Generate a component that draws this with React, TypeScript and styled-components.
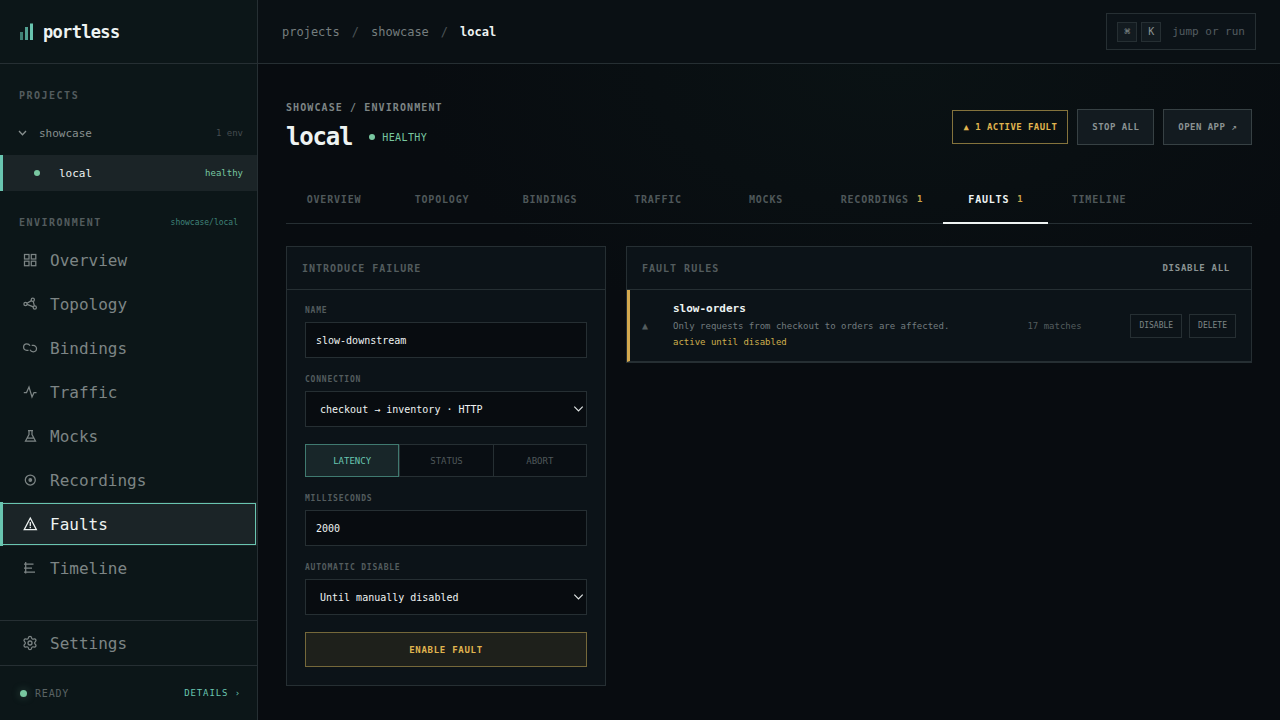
import React, { useState } from "react";
import styled, { createGlobalStyle, css } from "styled-components";
import { Settings } from "lucide-react";

const c = {
  page: "#080c10",
  sidebar: "#0c1618",
  panel: "#0c1318",
  raised: "#131b20",
  line: "#262f33",
  lineStrong: "#374144",
  text: "#eef3f2",
  soft: "#88908f",
  muted: "#535c5e",
  teal: "#69c5b0",
  green: "#78c7a0",
  amber: "#e0b54f",
};

const GlobalStyle = createGlobalStyle`
  *, *::before, *::after { box-sizing: border-box; }
  body {
    margin: 0;
    background: ${c.page};
    color: ${c.text};
    font-family: "DejaVu Sans Mono", "Liberation Mono", monospace;
    font-size: 11px;
  }
  button, input, select { font: inherit; color: inherit; }
  button { cursor: pointer; }
  a { color: inherit; text-decoration: none; }
  h1, h2, h3, p { margin: 0; }
`;

const Shell = styled.div`
  display: grid;
  grid-template-columns: 258px minmax(0, 1fr);
  min-height: 100vh;
`;

/* Sidebar */

const Sidebar = styled.aside`
  display: flex;
  flex-direction: column;
  background: ${c.sidebar};
  border-right: 1px solid ${c.line};
`;

const Brand = styled.a`
  display: flex;
  align-items: center;
  gap: 9px;
  height: 64px;
  padding-left: 19px;
  border-bottom: 1px solid ${c.line};
  font-size: 17px;
  font-weight: 700;
  letter-spacing: -0.04em;
`;

const SectionLabel = styled.div`
  display: flex;
  align-items: center;
  justify-content: space-between;
  height: 32px;
  padding: 0 19px;
  color: ${c.muted};
  font-size: 10px;
  font-weight: 700;
  letter-spacing: 0.15em;
`;

const Scope = styled.span`
  color: #3f8378;
  font-size: 8px;
  font-weight: 400;
  letter-spacing: 0;
`;

const Projects = styled.section`
  padding-top: 15px;
`;

const ProjectButton = styled.button`
  display: flex;
  align-items: center;
  width: 100%;
  height: 44px;
  padding: 0 14px 0 18px;
  border: 0;
  background: none;
  color: ${c.soft};
  text-align: left;
`;

const ProjectName = styled.span`
  flex: 1;
  margin-left: 12px;
`;

const Count = styled.span`
  color: #454d50;
  font-size: 9px;
`;

const EnvLink = styled.a`
  display: flex;
  align-items: center;
  height: 36px;
  padding: 0 14px 0 31px;
  border-left: 3px solid ${c.teal};
  background: #1b2427;
`;

const Dot = styled.i<{ $size?: number; $glow?: boolean }>`
  flex: none;
  width: ${(p) => p.$size ?? 6}px;
  height: ${(p) => p.$size ?? 6}px;
  border-radius: 50%;
  background: ${c.green};
  ${(p) => p.$glow && css`box-shadow: 0 0 8px rgba(120, 199, 160, 0.35);`}
`;

const EnvName = styled.span`
  flex: 1;
  margin-left: 19px;
`;

const EnvState = styled.span`
  color: ${c.green};
  font-size: 9px;
`;

const Nav = styled.nav`
  display: flex;
  flex-direction: column;
  flex: 1;
  padding: 15px 0 29px;
`;

const NavLink = styled.a<{ $active?: boolean }>`
  display: flex;
  align-items: center;
  gap: 12px;
  height: 44px;
  padding-left: 19px;
  border-left: 3px solid transparent;
  color: #7d8585;
  font-size: 16px;
  ${(p) =>
    p.$active &&
    css`
      border-left-color: ${c.teal};
      background: #1b2427;
      color: ${c.text};
      outline: 1px solid ${c.teal};
      outline-offset: -2px;
    `}
`;

const SettingsArea = styled.div`
  border-top: 1px solid ${c.line};
  border-bottom: 1px solid ${c.line};
`;

const StatusBar = styled.footer`
  display: flex;
  align-items: center;
  height: 54px;
  padding: 0 16px 0 20px;
`;

const Ready = styled.span`
  flex: 1;
  margin-left: 8px;
  color: #5a6364;
  font-size: 10px;
  letter-spacing: 0.08em;
`;

const DetailsButton = styled.button`
  padding: 0;
  border: 0;
  background: none;
  color: ${c.teal};
  font-size: 9px;
  letter-spacing: 0.1em;
`;

/* Top bar */

const Main = styled.div`
  display: flex;
  flex-direction: column;
  min-width: 0;
`;

const TopBar = styled.header`
  display: flex;
  align-items: center;
  justify-content: space-between;
  height: 64px;
  padding: 0 24px;
  border-bottom: 1px solid ${c.line};
  background: #0a1014;
`;

const Crumbs = styled.nav`
  display: flex;
  gap: 12px;
  color: #757d7e;
  font-size: 12px;
  strong { color: ${c.text}; }
  span { color: #4a5355; }
`;

const Jump = styled.button`
  display: flex;
  align-items: center;
  gap: 4px;
  height: 37px;
  padding: 0 10px;
  border: 1px solid ${c.line};
  background: #0c1318;
  color: #535c60;
`;

const Key = styled.kbd`
  display: grid;
  place-items: center;
  width: 20px;
  height: 20px;
  border: 1px solid ${c.line};
  background: ${c.raised};
  color: #8b9393;
  font: inherit;
  font-size: 10px;
`;

const JumpText = styled.span`
  margin-left: 7px;
`;

/* Page head */

const Content = styled.main`
  flex: 1;
  padding: 35px 28px 28px;
  background: radial-gradient(ellipse 480px 280px at 62% 0, #0a1214, rgba(10, 18, 20, 0));
`;

const PageHead = styled.div`
  display: flex;
  align-items: center;
  justify-content: space-between;
`;

const Eyebrow = styled.p`
  color: #7d8585;
  font-size: 10px;
  font-weight: 700;
  line-height: 18px;
  letter-spacing: 0.11em;
`;

const TitleRow = styled.div`
  display: flex;
  align-items: center;
  gap: 17px;
  margin-top: 2px;
`;

const Title = styled.h1`
  font-size: 24px;
  line-height: 36px;
  letter-spacing: -0.05em;
`;

const Health = styled.span`
  display: flex;
  align-items: center;
  gap: 7px;
  color: ${c.green};
  font-size: 10px;
  letter-spacing: 0.04em;
`;

const Actions = styled.div`
  display: flex;
  align-items: center;
  gap: 9px;
`;

const ActionButton = styled.button`
  height: 36px;
  padding: 0 14px;
  border: 1px solid ${c.lineStrong};
  background: ${c.raised};
  color: #8b9393;
  font-size: 9px;
  font-weight: 700;
  letter-spacing: 0.05em;
`;

const FaultAlert = styled.button`
  height: 34px;
  padding: 0 10px;
  border: 1px solid #84733c;
  background: transparent;
  color: ${c.amber};
  font-size: 9px;
  font-weight: 700;
  letter-spacing: 0.05em;
`;

const TabBar = styled.div`
  margin-top: 19px;
  border-bottom: 1px solid ${c.line};
`;

const Tabs = styled.nav`
  display: grid;
  grid-template-columns: repeat(5, 108px) 123px 105px 102px;
  margin: 0 0 -1px -6px;
`;

const Tab = styled.a<{ $active?: boolean }>`
  display: flex;
  align-items: center;
  justify-content: center;
  gap: 8px;
  height: 50px;
  padding-top: 2px;
  border-bottom: 2px solid ${(p) => (p.$active ? c.text : "transparent")};
  color: ${(p) => (p.$active ? c.text : "#4f585a")};
  font-size: 10px;
  font-weight: 700;
  letter-spacing: 0.08em;
  small {
    color: #c9a44b;
    font-size: 9px;
    letter-spacing: 0;
  }
`;

/* Panels */

const Columns = styled.div`
  display: grid;
  grid-template-columns: 320px minmax(0, 1fr);
  align-items: start;
  gap: 20px;
  margin-top: 22px;
`;

const Panel = styled.section`
  border: 1px solid ${c.line};
  background: ${c.panel};
`;

const PanelHead = styled.header`
  display: flex;
  align-items: center;
  justify-content: space-between;
  height: 43px;
  padding: 0 15px;
  border-bottom: 1px solid ${c.line};
`;

const PanelTitle = styled.h2`
  color: #535c5e;
  font-size: 10px;
  letter-spacing: 0.1em;
`;

const TextButton = styled.button`
  padding: 0 6px;
  border: 0;
  background: none;
  color: #8b9393;
  font-size: 9px;
  font-weight: 700;
  letter-spacing: 0.08em;
`;

const Form = styled.form`
  display: flex;
  flex-direction: column;
  gap: 17px;
  padding: 16px 18px 18px;
`;

const Field = styled.label`
  display: flex;
  flex-direction: column;
  gap: 6px;
`;

const FieldLabel = styled.span`
  color: #535c5e;
  font-size: 8px;
  font-weight: 700;
  line-height: 10px;
  letter-spacing: 0.1em;
`;

const control = css`
  width: 100%;
  height: 36px;
  border: 1px solid ${c.line};
  border-radius: 0;
  background: #080c10;
  color: ${c.text};
  font-size: 10px;
`;

const TextInput = styled.input`
  ${control}
  padding: 0 10px;
`;

const SelectBox = styled.span`
  display: grid;
  align-items: center;
  color: #dfe4e3;
  > * { grid-area: 1 / 1; }
  svg {
    justify-self: end;
    margin-right: 3px;
    pointer-events: none;
  }
`;

const Select = styled.select`
  ${control}
  padding: 0 14px;
  appearance: none;
`;

const Segments = styled.div`
  display: grid;
  grid-template-columns: repeat(3, 1fr);
  height: 33px;
  border: 1px solid ${c.line};
  background: #090e13;
`;

const Segment = styled.button<{ $active: boolean }>`
  padding: 0;
  border: 0;
  background: none;
  color: #4f585a;
  font-size: 9px;
  & + & { border-left: 1px solid ${c.line}; }
  ${(p) =>
    p.$active &&
    css`
      margin: -1px 0 -1px -1px;
      background: #182629;
      color: ${c.teal};
      box-shadow: inset 0 0 0 1px #407a70;
    `}
`;

const EnableButton = styled.button`
  height: 35px;
  border: 1px solid #75683a;
  background: #1e201b;
  color: ${c.amber};
  font-size: 9px;
  font-weight: 700;
  letter-spacing: 0.08em;
`;

const Rule = styled.article`
  display: flex;
  align-items: center;
  gap: 14px;
  height: 72px;
  padding: 0 15px 0 12px;
  border-left: 3px solid #d3a94f;
  border-bottom: 1px solid ${c.line};
`;

const RuleMark = styled.span`
  width: 17px;
  color: #535c5e;
  font-size: 10px;
`;

const RuleText = styled.div`
  flex: 1;
  min-width: 0;
  padding-bottom: 1px;
  font-size: 9px;
  line-height: 16px;
`;

const RuleName = styled.h3`
  font-size: 11px;
  line-height: 18px;
`;

const RuleNote = styled.p`
  color: #727b7e;
`;

const RuleState = styled.p`
  color: #ceaf4c;
`;

const Matches = styled.span`
  width: 89px;
  color: #535c5e;
  font-size: 9px;
`;

const RuleActions = styled.div`
  display: flex;
  gap: 7px;
`;

const SmallButton = styled.button`
  height: 24px;
  padding: 0 8px;
  border: 1px solid ${c.line};
  background: none;
  color: #7d8585;
  font-size: 8px;
`;

/* Icons */

const Glyph = ({ children }: { children: React.ReactNode }) => (
  <svg
    width="16"
    height="16"
    viewBox="0 0 16 16"
    fill="none"
    stroke="currentColor"
    strokeWidth="1.25"
    aria-hidden="true"
  >
    {children}
  </svg>
);

const Logo = () => (
  <svg width="15" height="18" viewBox="0 0 15 18" aria-hidden="true">
    <rect x="1" y="9" width="3" height="8" fill="#3f8074" />
    <rect x="6" y="4" width="3" height="13" fill="#529f90" />
    <rect x="11" y="0.5" width="3" height="16.5" fill={c.teal} />
  </svg>
);

const Chevron = () => (
  <svg width="9" height="6" viewBox="0 0 9 6" fill="none" stroke="currentColor" strokeWidth="1.3" aria-hidden="true">
    <path d="M1 1 4.5 4.7 8 1" />
  </svg>
);

const SelectChevron = () => (
  <svg width="11" height="8" viewBox="0 0 11 8" fill="none" stroke="currentColor" strokeWidth="1.2" aria-hidden="true">
    <path d="M1.300 1.700 5.500 6 9.700 1.700" />
  </svg>
);

const navItems = [
  {
    label: "Overview",
    icon: (
      <>
        <rect x="2.5" y="2.5" width="4.5" height="4.500" />
        <rect x="9.3" y="2.5" width="4.500" height="4.500" />
        <rect x="2.5" y="9.2" width="4.500" height="4.500" />
        <rect x="9.3" y="9.2" width="4.500" height="4.500" />
      </>
    ),
  },
  {
    label: "Topology",
    icon: (
      <>
        <circle cx="3.500" cy="8" r="1.600" />
        <circle cx="10.800" cy="3.800" r="1.600" />
        <circle cx="12.800" cy="11.500" r="1.600" />
        <path d="M5 7.200 9.400 4.600M5.100 8.400l6.200 2.500M11.200 5.300l1.200 4.600" />
      </>
    ),
  },
  {
    label: "Bindings",
    icon: (
      <>
        <path d="M8 5.800C7.400 4.600 6.300 3.900 4.800 3.900a3.200 3.200 0 0 0 0 6.400h1.700" />
        <path d="M8 9.700c.6 1.300 1.700 2.100 3.300 2.100a3.200 3.200 0 0 0 0-6.400H9.700" />
      </>
    ),
  },
  { label: "Traffic", icon: <path d="M1.800 8.500h2.700L7 3l3 10 2-4.500h2.500" /> },
  {
    label: "Mocks",
    icon: <path d="M6 2.500h5M7 2.500v4L3.500 13h10L10 6.500v-4M5.300 10h6.400" />,
  },
  {
    label: "Recordings",
    icon: (
      <>
        <circle cx="8.300" cy="8" r="5" />
        <circle cx="8.300" cy="8" r="1.300" fill="currentColor" />
      </>
    ),
  },
  {
    label: "Faults",
    icon: <path d="M8.300 2 14.400 13.700H2.200zM8.300 6v4.200M8.300 11v1.300" />,
  },
  {
    label: "Timeline",
    icon: <path d="M3.700 2v11.500M2 4h9.500M2 8h8M2 12.200h11" />,
  },
];

const tabs: { label: string; count?: number }[] = [
  { label: "OVERVIEW" },
  { label: "TOPOLOGY" },
  { label: "BINDINGS" },
  { label: "TRAFFIC" },
  { label: "MOCKS" },
  { label: "RECORDINGS", count: 1 },
  { label: "FAULTS", count: 1 },
  { label: "TIMELINE" },
];

const modes = ["LATENCY", "STATUS", "ABORT"];

export default function App() {
  const [mode, setMode] = useState("LATENCY");

  return (
    <>
      <GlobalStyle />
      <Shell>
        <Sidebar>
          <Brand href="#home">
            <Logo />
            portless
          </Brand>
          <Projects>
            <SectionLabel>PROJECTS</SectionLabel>
            <ProjectButton type="button" aria-expanded="true">
              <Chevron />
              <ProjectName>showcase</ProjectName>
              <Count>1 env</Count>
            </ProjectButton>
            <EnvLink href="#local">
              <Dot />
              <EnvName>local</EnvName>
              <EnvState>healthy</EnvState>
            </EnvLink>
          </Projects>
          <Nav>
            <SectionLabel>
              ENVIRONMENT <Scope>showcase/local</Scope>
            </SectionLabel>
            {navItems.map((item) => (
              <NavLink key={item.label} href={`#${item.label.toLowerCase()}`} $active={item.label === "Faults"}>
                <Glyph>{item.icon}</Glyph>
                {item.label}
              </NavLink>
            ))}
          </Nav>
          <SettingsArea>
            <NavLink href="#settings">
              <Settings size={16} strokeWidth={1.900} />
              Settings
            </NavLink>
          </SettingsArea>
          <StatusBar>
            <Dot $size={7} $glow />
            <Ready>READY</Ready>
            <DetailsButton type="button">DETAILS ›</DetailsButton>
          </StatusBar>
        </Sidebar>

        <Main>
          <TopBar>
            <Crumbs aria-label="Breadcrumb">
              <a href="#projects">projects</a>
              <span>/</span>
              <a href="#showcase">showcase</a>
              <span>/</span>
              <strong>local</strong>
            </Crumbs>
            <Jump type="button">
              <Key>⌘</Key>
              <Key>K</Key>
              <JumpText>jump or run</JumpText>
            </Jump>
          </TopBar>

          <Content>
            <PageHead>
              <div>
                <Eyebrow>SHOWCASE / ENVIRONMENT</Eyebrow>
                <TitleRow>
                  <Title>local</Title>
                  <Health>
                    <Dot />
                    HEALTHY
                  </Health>
                </TitleRow>
              </div>
              <Actions>
                <FaultAlert type="button">▲ 1 ACTIVE FAULT</FaultAlert>
                <ActionButton type="button">STOP ALL</ActionButton>
                <ActionButton type="button">OPEN APP ↗</ActionButton>
              </Actions>
            </PageHead>

            <TabBar>
              <Tabs aria-label="Environment views">
                {tabs.map((tab) => (
                  <Tab key={tab.label} href={`#${tab.label.toLowerCase()}`} $active={tab.label === "FAULTS"}>
                    {tab.label}
                    {tab.count && <small>{tab.count}</small>}
                  </Tab>
                ))}
              </Tabs>
            </TabBar>

            <Columns>
              <Panel>
                <PanelHead>
                  <PanelTitle>INTRODUCE FAILURE</PanelTitle>
                </PanelHead>
                <Form onSubmit={(e) => e.preventDefault()}>
                  <Field>
                    <FieldLabel>NAME</FieldLabel>
                    <TextInput defaultValue="slow-downstream" />
                  </Field>
                  <Field>
                    <FieldLabel>CONNECTION</FieldLabel>
                    <SelectBox>
                      <Select>
                        <option>checkout → inventory · HTTP</option>
                      </Select>
                      <SelectChevron />
                    </SelectBox>
                  </Field>
                  <Segments role="group" aria-label="Failure type">
                    {modes.map((m) => (
                      <Segment key={m} type="button" $active={m === mode} aria-pressed={m === mode} onClick={() => setMode(m)}>
                        {m}
                      </Segment>
                    ))}
                  </Segments>
                  <Field>
                    <FieldLabel>MILLISECONDS</FieldLabel>
                    <TextInput defaultValue="2000" inputMode="numeric" />
                  </Field>
                  <Field>
                    <FieldLabel>AUTOMATIC DISABLE</FieldLabel>
                    <SelectBox>
                      <Select>
                        <option>Until manually disabled</option>
                      </Select>
                      <SelectChevron />
                    </SelectBox>
                  </Field>
                  <EnableButton type="submit">ENABLE FAULT</EnableButton>
                </Form>
              </Panel>

              <Panel>
                <PanelHead>
                  <PanelTitle>FAULT RULES</PanelTitle>
                  <TextButton type="button">DISABLE ALL</TextButton>
                </PanelHead>
                <Rule>
                  <RuleMark>▲</RuleMark>
                  <RuleText>
                    <RuleName>slow-orders</RuleName>
                    <RuleNote>Only requests from checkout to orders are affected.</RuleNote>
                    <RuleState>active until disabled</RuleState>
                  </RuleText>
                  <Matches>17 matches</Matches>
                  <RuleActions>
                    <SmallButton type="button">DISABLE</SmallButton>
                    <SmallButton type="button">DELETE</SmallButton>
                  </RuleActions>
                </Rule>
              </Panel>
            </Columns>
          </Content>
        </Main>
      </Shell>
    </>
  );
}
